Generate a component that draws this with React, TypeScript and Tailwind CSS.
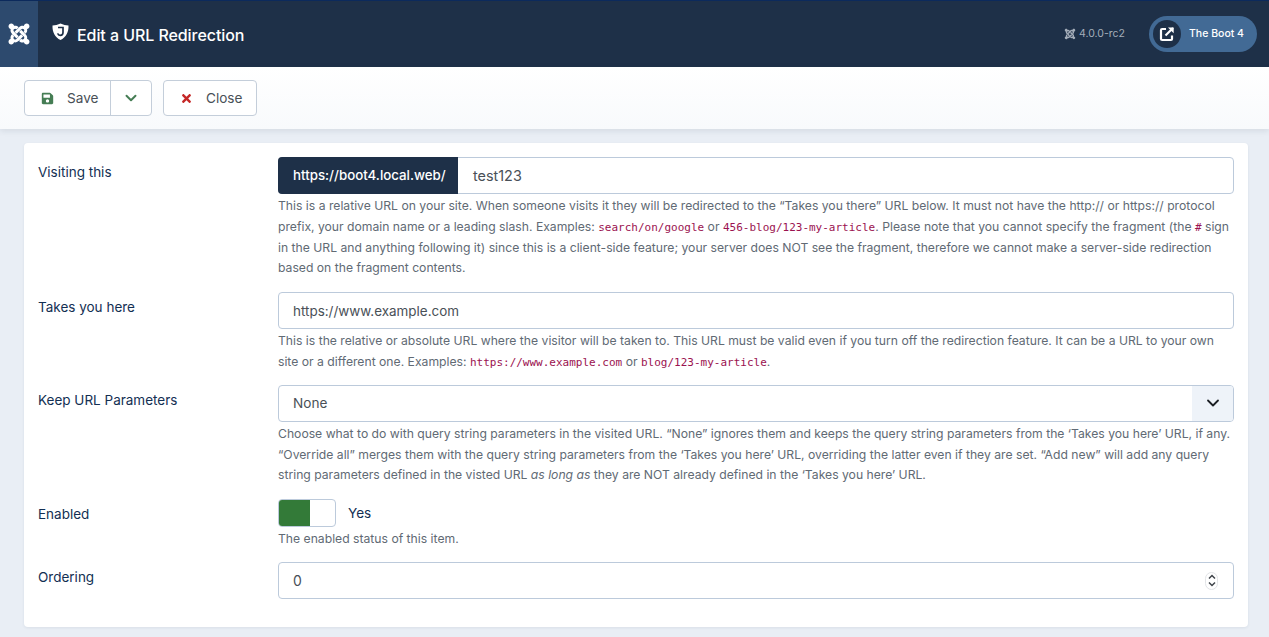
import React from "react";
import { FaJoomla, FaSave, FaTimes } from "react-icons/fa";
import { ChevronDown } from "lucide-react";

const font = { fontFamily: "Inter, 'Liberation Sans', sans-serif" };

function C({ children }: { children: React.ReactNode }) {
  return <code className="font-['DejaVu_Sans_Mono',monospace] text-[11px] leading-none text-[#9b1250]">{children}</code>;
}

function Row({ label, children, className }: { label: string; children: React.ReactNode; className?: string }) {
  return (
    <div className={"flex " + (className || "")}>
      <div className="w-[254px] shrink-0 pl-[14px] pt-[5px] text-[13.5px] leading-[20px] text-[#132f53]">{label}</div>
      <div className="w-[956px] shrink-0">{children}</div>
    </div>
  );
}

function Help({ children }: { children: React.ReactNode }) {
  return <div className="mt-[2px] text-[12.18px] leading-[20.8px] text-[#616a74] whitespace-nowrap">{children}</div>;
}

export default function App() {
  return (
    <div className="h-[637px] w-[1269px] overflow-hidden bg-[#e9eef5]" style={font}>
      <header className="flex h-[67px] items-stretch border-t border-[#0c2a5c] bg-[#1e3048]">
        <div className="flex w-[38px] items-center justify-center bg-[#2d4a6e]">
          <FaJoomla className="text-white" size={24} />
        </div>
        <div className="flex items-center pl-[14px]">
          <svg width="17" height="18" viewBox="0 0 17 18" className="mb-[4px]">
            <path d="M0.5 2.5C3 2.5 6 1.5 8.5 0.5C11 1.5 14 2.5 16.5 2.5C16.8 9 14 14.5 8.5 17C3 14.5 0.2 9 0.5 2.5Z" fill="#fff" />
            <path d="M6 4.5H11V9.5C11 11.5 9.8 12.3 8.3 12.3C7 12.3 6 11.6 5.7 10.4" fill="none" stroke="#1e3048" strokeWidth="1.7" />
          </svg>
          <h1 className="ml-[8px] text-[16px] font-medium leading-[24px] tracking-[-0.07px] text-white mt-[1px]">Edit a URL Redirection</h1>
        </div>
        <div className="ml-auto flex items-center pr-[12px]">
          <FaJoomla className="text-[#a4adb9]" size={12} />
          <span className="ml-[3px] text-[10.5px] text-[#a4adb9]">4.0.0-rc2</span>
          <div className="ml-[24px] flex h-[36px] w-[108px] items-center rounded-full bg-[#426a95] pl-[4px]">
            <div className="flex h-[28px] w-[28px] items-center justify-center rounded-full bg-[#1e3048]">
              <svg width="18" height="18" viewBox="0 0 18 18" fill="none" stroke="#fff" strokeWidth="2.2">
                <path d="M8 4H4.2C3.5 4 3 4.5 3 5.2V14C3 14.6 3.5 15 4.2 15H13C13.6 15 14 14.6 14 14V10.5" />
                <path d="M7.5 10.5L15 3" />
                <path d="M10 2.5H15.7V8.2" fill="#fff" stroke="none" />
              </svg>
            </div>
            <span className="ml-[8px] text-[10.5px] font-medium text-white">The Boot 4</span>
          </div>
        </div>
      </header>

      <div className="flex h-[62px] items-start bg-gradient-to-b from-white to-[#f8fafc] pl-[24px] pt-[13px] shadow-[0_2px_6px_rgba(30,48,72,0.1)]">
        <div className="flex h-[36px] rounded-[4px] border border-[#c4ceda] bg-white text-[13.6px] text-[#495057]">
          <div className="flex w-[86px] items-center border-r border-[#c4ceda] pl-[16px]">
            <FaSave className="text-[#457d54]" size={13} />
            <span className="ml-[13px]">Save</span>
          </div>
          <div className="flex w-[40px] items-center justify-center">
            <ChevronDown className="text-[#457d54]" size={18} strokeWidth={2.6} />
          </div>
        </div>
        <div className="ml-[11px] flex h-[36px] w-[94px] items-center rounded-[4px] border border-[#c4ceda] bg-white pl-[16px] text-[13.6px] text-[#495057]">
          <FaTimes className="text-[#c52827]" size={13} />
          <span className="ml-[13px]">Close</span>
        </div>
      </div>

      <main className="mx-[24px] mt-[14px] h-[484px] w-[1224px] rounded-[4px] bg-white pt-[14px] shadow-[0_1px_3px_rgba(30,48,72,0.08)]">
        <Row label="Visiting this">
          <div className="flex h-[37px] rounded-[4px] border border-[#bccadb] text-[14px]">
            <div className="-m-[1px] flex w-[180px] items-center rounded-l-[4px] bg-[#1e3048] pl-[15px] text-[13.3px] font-medium text-white">https://boot4.local.web/</div>
            <div className="ml-[1px] flex items-center pl-[15px] text-[14.4px] text-[#495057]">test123</div>
          </div>
          <Help>
            This is a relative URL on your site. When someone visits it they will be redirected to the “Takes you there” URL below. It must not have the http:// or https:// protocol
            <br />
            prefix, your domain name or a leading slash. Examples: <C>search/on/google</C> or <C>456-blog/123-my-article</C>. Please note that you cannot specify the fragment (the <C>#</C> sign
            <br />
            in the URL and anything following it) since this is a client-side feature; your server does NOT see the fragment, therefore we cannot make a server-side redirection
            <br />
            based on the fragment contents.
          </Help>
        </Row>

        <Row label="Takes you here" className="mt-[13px]">
          <div className="flex h-[37px] items-center rounded-[4px] border border-[#bccadb] pl-[14px] text-[13.45px] text-[#495057]">https://www.example.com</div>
          <Help>
            This is the relative or absolute URL where the visitor will be taken to. This URL must be valid even if you turn off the redirection feature. It can be a URL to your own
            <br />
            site or a different one. Examples: <C>https://www.example.com</C> or <C>blog/123-my-article</C>.
          </Help>
        </Row>

        <Row label="Keep URL Parameters" className="mt-[12px]">
          <div className="flex h-[37px] items-center overflow-hidden rounded-[4px] border border-[#bccadb] pl-[14px] text-[13.6px] text-[#495057]">
            <span>None</span>
            <div className="ml-auto flex h-full w-[41px] items-center justify-center bg-[#eef3f9]">
              <ChevronDown className="text-[#1b1f24]" size={20} strokeWidth={2.2} />
            </div>
          </div>
          <Help>
            Choose what to do with query string parameters in the visited URL. “None” ignores them and keeps the query string parameters from the ‘Takes you here’ URL, if any.
            <br />
            “Override all” merges them with the query string parameters from the ‘Takes you here’ URL, overriding the latter even if they are set. “Add new” will add any query
            <br />
            string parameters defined in the visted URL <em>as long as</em> they are NOT already defined in the ‘Takes you here’ URL.
          </Help>
        </Row>

        <Row label="Enabled" className="mt-[13px]">
          <div className="flex h-[28px] items-center">
            <div className="flex h-[28px] w-[58px] overflow-hidden rounded-[4px] border border-[#bccadb]">
              <div className="h-full w-[31px] bg-[#337a38]" />
            </div>
            <span className="ml-[12px] text-[13.6px] text-[#132f53]">Yes</span>
          </div>
          <Help>The enabled status of this item.</Help>
        </Row>

        <Row label="Ordering" className="mt-[12px]">
          <div className="relative flex h-[37px] items-center rounded-[4px] border border-[#bccadb] pl-[14px] text-[14px] text-[#495057]">
            <span>0</span>
            <div className="absolute right-[15px] top-[9px] flex h-[18px] w-[13px] flex-col items-center justify-center rounded-full border border-[#e2e4e7] bg-white">
              <svg width="8" height="13" viewBox="0 0 8 13" fill="none" stroke="#3f444a" strokeWidth="1.5">
                <path d="M1 4.5L4 1.5L7 4.5" />
                <path d="M1 8.5L4 11.5L7 8.5" />
              </svg>
            </div>
          </div>
        </Row>
      </main>
    </div>
  );
}
